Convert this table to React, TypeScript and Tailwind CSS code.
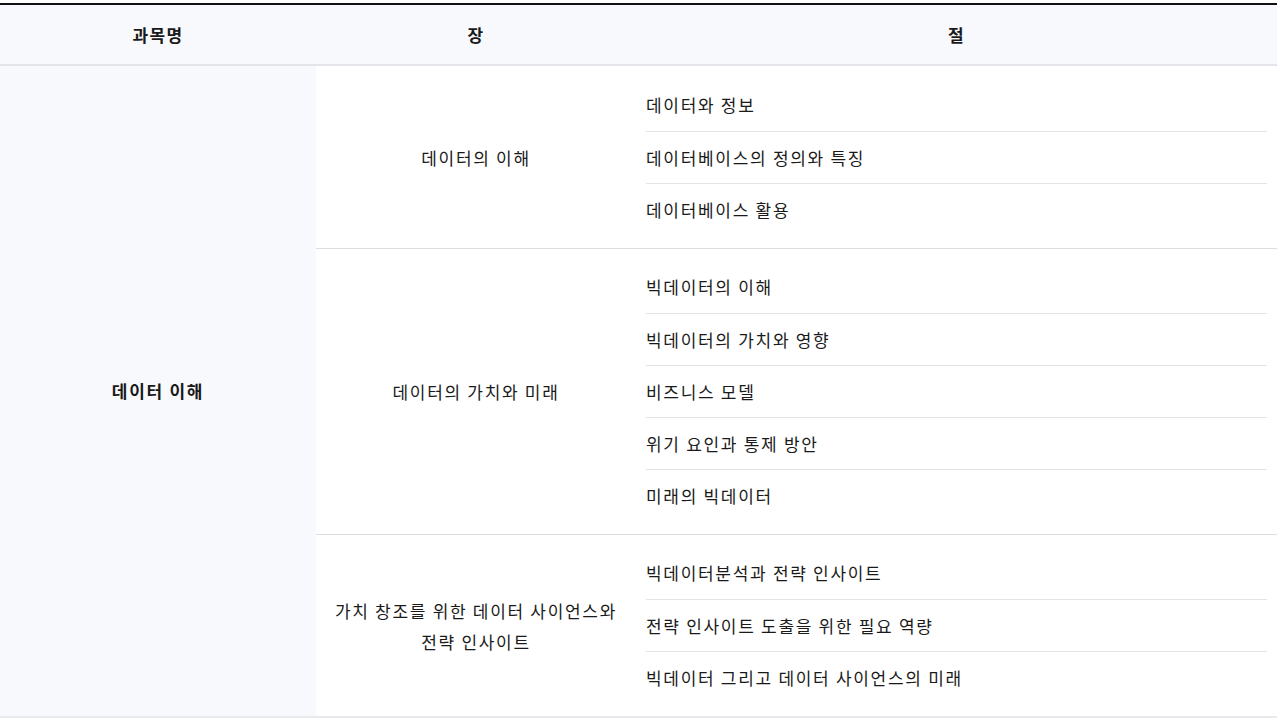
const curriculum = [
  {
    chapter: ["데이터의 이해"],
    sections: ["데이터와 정보", "데이터베이스의 정의와 특징", "데이터베이스 활용"],
  },
  {
    chapter: ["데이터의 가치와 미래"],
    sections: [
      "빅데이터의 이해",
      "빅데이터의 가치와 영향",
      "비즈니스 모델",
      "위기 요인과 통제 방안",
      "미래의 빅데이터",
    ],
  },
  {
    chapter: ["가치 창조를 위한 데이터 사이언스와", "전략 인사이트"],
    sections: [
      "빅데이터분석과 전략 인사이트",
      "전략 인사이트 도출을 위한 필요 역량",
      "빅데이터 그리고 데이터 사이언스의 미래",
    ],
  },
];

export default function App() {
  return (
    <div
      className="min-h-[720px] bg-white pt-[3px] text-[17px] tracking-[1.7px] text-[#1a1a1a]"
      style={{ fontFamily: '"Noto Sans CJK KR", "Noto Sans", sans-serif' }}
    >
      <div className="w-[1277px] border-t-2 border-[#111]">
        {/* header */}
        <div className="flex h-[61px] items-center border-b-2 border-[#e3e5ea] bg-[#f8f9fd] font-bold tracking-[1.3px]">
          <div className="w-[316px] text-center">과목명</div>
          <div className="w-[320px] text-center">장</div>
          <div className="flex-1 text-center">절</div>
        </div>

        {/* body */}
        <div className="flex border-b-2 border-[#e9eaee]">
          <div className="flex w-[316px] items-center justify-center bg-[#f8f9fd] font-bold">
            데이터 이해
          </div>
          <div className="flex-1">
            {curriculum.map((c, i) => (
              <div
                key={i}
                className={
                  i > 0 ? "flex border-t border-[#dcdde3]" : "flex"
                }
              >
                <div className="flex w-[320px] flex-col items-center justify-center text-center leading-[31px]">
                  {c.chapter.map((line) => (
                    <div key={line}>{line}</div>
                  ))}
                </div>
                <div
                  className={
                    i > 0
                      ? "flex-1 px-[10px] pt-[12px] pb-[13px]"
                      : "flex-1 px-[10px] py-[13px]"
                  }
                >
                  {c.sections.map((s, j) => (
                    <div
                      key={s}
                      className={
                        j > 0
                          ? "flex h-[52px] items-center border-t border-[#e2e3e8]"
                          : "flex h-[52px] items-center"
                      }
                    >
                      {s}
                    </div>
                  ))}
                </div>
              </div>
            ))}
          </div>
        </div>
      </div>
    </div>
  );
}
